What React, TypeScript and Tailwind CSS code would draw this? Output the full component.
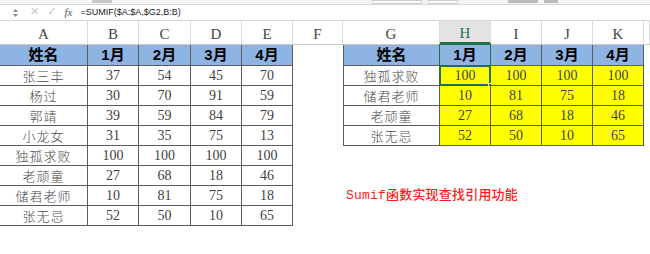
import React from 'react';

const widths = [88, 51, 52, 51, 51, 50, 97, 51, 51, 51, 51, 6];
const letters = ['A', 'B', 'C', 'D', 'E', 'F', 'G', 'H', 'I', 'J', 'K', ''];

const left: string[][] = [
  ['张三丰', '37', '54', '45', '70'],
  ['杨过', '30', '70', '91', '59'],
  ['郭靖', '39', '59', '84', '79'],
  ['小龙女', '31', '35', '75', '13'],
  ['独孤求败', '100', '100', '100', '100'],
  ['老顽童', '27', '68', '18', '46'],
  ['储君老师', '10', '81', '75', '18'],
  ['张无忌', '52', '50', '10', '65'],
];

const right: string[][] = [
  ['独孤求败', '100', '100', '100', '100'],
  ['储君老师', '10', '81', '75', '18'],
  ['老顽童', '27', '68', '18', '46'],
  ['张无忌', '52', '50', '10', '65'],
];

const heads = ['姓名', '1月', '2月', '3月', '4月'];

const serif = "font-['Liberation_Serif','Noto_Sans_CJK_SC',serif]";
const cjk = "font-['Noto_Sans_CJK_SC',sans-serif]";
const bold = "font-['Liberation_Sans','Noto_Sans_CJK_SC',sans-serif] font-bold text-[15px] text-black";

function Cell({ w, className = '', children }: { w: number; className?: string; children?: React.ReactNode }) {
  return (
    <div className={`relative flex shrink-0 items-center justify-center box-border ${className}`} style={{ width: w }}>
      {children}
    </div>
  );
}

function TextFor({ v, i }: { v: string; i: number }) {
  if (i === 0) return <span className={`${cjk} text-[13px] font-light text-[#4a4a4a] tracking-[1px]`}>{v}</span>;
  return <span className={`${serif} text-[14px] text-[#3f3f3f]`}>{v}</span>;
}

export default function App() {
  // rows of the sheet: 0 = header row, 1..8 = data
  const rows = Array.from({ length: 9 }, (_, r) => r);

  return (
    <div className="w-[650px] h-[254px] overflow-hidden bg-white">
      {/* ribbon remnant */}
      <div className="h-[5px] bg-[#f4f4f4] border-b border-[#d6d6d6] flex">
        <div className="w-[92px]" />
        <div className="w-[20px] h-[3px] bg-[#c8c8c8]" />
        <div className="w-[260px]" />
        <div className="w-[50px] h-[4px] bg-white border border-[#d0d0d0]" />
        <div className="w-[6px]" />
        <div className="w-[30px] h-[4px] bg-white border border-[#d0d0d0]" />
        <div className="w-[50px]" />
        <div className="w-[30px] h-[3px] bg-[#bbbbbb]" />
        <div className="w-[6px]" />
        <div className="w-[14px] h-[3px] bg-[#bbbbbb]" />
      </div>

      {/* formula bar */}
      <div className="h-[16px] flex items-center border-b border-[#d6d6d6] bg-white">
        <div className="w-[12px]" />
        <svg width="7" height="10" viewBox="0 0 7 10" className="shrink-0">
          <path d="M1 4 L3.5 1 L6 4 Z" fill="#8a8a8a" />
          <path d="M1 6 L3.5 9 L6 6 Z" fill="#8a8a8a" />
        </svg>
        <div className="w-[11px]" />
        <span className="text-[11px] text-[#c2c2c2] font-['DejaVu_Sans',sans-serif]">✕</span>
        <div className="w-[8px]" />
        <span className="text-[11px] text-[#c2c2c2] font-['DejaVu_Sans',sans-serif]">✓</span>
        <div className="w-[8px]" />
        <span className="text-[11px] italic text-[#555] font-['Liberation_Serif',serif]">fx</span>
        <div className="w-[8px]" />
        <span className="text-[9px] text-[#222] font-['Liberation_Sans',sans-serif]">=SUMIF($A:$A,$G2,B:B)</span>
      </div>

      {/* column letters */}
      <div className="h-[24px] flex border-b border-[#c8c8c8] bg-white">
        {letters.map((l, i) => (
          <Cell
            key={i}
            w={widths[i]}
            className={`border-r border-[#dadada] pt-[3px] ${i === 7 ? 'bg-[#e3e3e3] border-b-2 border-b-[#217346]' : ''}`}
          >
            <span className={`${serif} text-[15px] ${i === 7 ? 'text-[#217346]' : 'text-[#444]'}`}>{l}</span>
          </Cell>
        ))}
      </div>

      {rows.map((r) => {
        const isHead = r === 0;
        const h = isHead ? 'h-[21px]' : 'h-[20px]';
        const lrow = isHead ? heads : left[r - 1];
        const rrow = isHead ? heads : r <= 4 ? right[r - 1] : null;
        return (
          <div key={r} className={`flex ${h}`}>
            {lrow.map((v, i) => (
              <Cell
                key={i}
                w={widths[i]}
                className={`border-r border-b border-[#5c5c5c] ${isHead ? 'bg-[#8db4e2]' : ''}`}
              >
                {isHead ? <span className={bold}>{v}</span> : <TextFor v={v} i={i} />}
              </Cell>
            ))}
            <Cell w={widths[5]} />
            {rrow
              ? rrow.map((v, i) => (
                  <Cell
                    key={i}
                    w={widths[6 + i]}
                    className={`border-r border-b border-[#5c5c5c] ${i === 0 ? 'border-l' : ''} ${
                      isHead ? 'bg-[#8db4e2]' : i > 0 ? 'bg-[#ffff00]' : ''
                    }`}
                  >
                    {isHead ? <span className={bold}>{v}</span> : <TextFor v={v} i={i} />}
                    {r === 1 && i === 1 && (
                      <>
                        <div className="absolute -left-px -top-px -right-px -bottom-px border-2 border-[#217346]" />
                        <div className="absolute -right-[3px] -bottom-[3px] w-[5px] h-[5px] bg-[#217346] border border-white" />
                      </>
                    )}
                    {isHead && i === 1 && (
                      <div className="absolute -left-px -top-px -right-px bottom-0 border border-[#217346] border-b-0" />
                    )}
                  </Cell>
                ))
              : r === 7 && (
                  <div className="flex items-center pl-[3px]">
                    <span className="font-['Liberation_Mono','Noto_Sans_CJK_SC',monospace] text-[13px] font-medium text-[#ff1a1a] whitespace-nowrap tracking-[0.2px]">
                      Sumif函数实现查找引用功能
                    </span>
                  </div>
                )}
          </div>
        );
      })}
    </div>
  );
}
